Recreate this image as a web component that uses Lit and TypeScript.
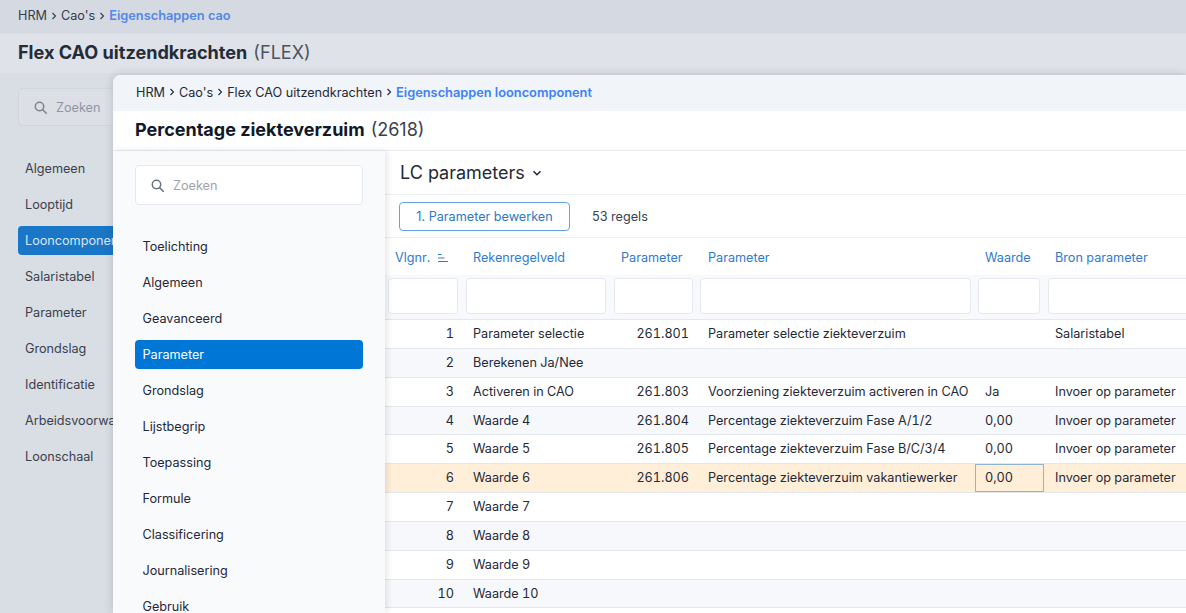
import { LitElement, html, css, svg } from "lit";
import { customElement } from "lit/decorators.js";

const searchIcon = svg`<circle cx="6.5" cy="6.5" r="4.2" fill="none" stroke="currentColor" stroke-width="1.5"/><path d="M9.7 9.7 13.2 13.2" fill="none" stroke="currentColor" stroke-width="1.6" stroke-linecap="round"/>`;

const rows: string[][] = [
  ["1", "Parameter selectie", "261.801", "Parameter selectie ziekteverzuim", "", "Salaristabel"],
  ["2", "Berekenen Ja/Nee", "", "", "", ""],
  ["3", "Activeren in CAO", "261.803", "Voorziening ziekteverzuim activeren in CAO", "Ja", "Invoer op parameter"],
  ["4", "Waarde 4", "261.804", "Percentage ziekteverzuim Fase A/1/2", "0,00", "Invoer op parameter"],
  ["5", "Waarde 5", "261.805", "Percentage ziekteverzuim Fase B/C/3/4", "0,00", "Invoer op parameter"],
  ["6", "Waarde 6", "261.806", "Percentage ziekteverzuim vakantiewerker", "0,00", "Invoer op parameter"],
  ["7", "Waarde 7", "", "", "", ""],
  ["8", "Waarde 8", "", "", "", ""],
  ["9", "Waarde 9", "", "", "", ""],
  ["10", "Waarde 10", "", "", "", ""],
];

const backNav = ["Algemeen", "Looptijd", "Looncomponenten", "Salaristabel", "Parameter", "Grondslag", "Identificatie", "Arbeidsvoorwaarden", "Loonschaal"];
const frontNav = ["Toelichting", "Algemeen", "Geavanceerd", "Parameter", "Grondslag", "Lijstbegrip", "Toepassing", "Formule", "Classificering", "Journalisering", "Gebruik"];

@customElement("app-root")
export class AppRoot extends LitElement {
  static styles = css`
    :host {
      display: block;
      position: relative;
      width: 1186px;
      height: 613px;
      overflow: hidden;
      background: #d9dde4;
      font-family: Inter, "Liberation Sans", sans-serif;
      font-size: 12.65px;
      color: #1f2937;
    }
    .crumbs { display: flex; align-items: center; gap: 3px; font-size: 12.65px; color: #343c4a; box-sizing: border-box; padding-bottom: 2px; }
    .crumbs svg { width: 8px; height: 8px; }
    .crumbs b { font-weight: 600; font-size: 12.8px; color: #5288e6; }
    .back-crumbs { height: 33px; padding-left: 18px; background: #d5dae2; }
    .back-title {
      height: 40px; padding: 0 0 4px 18px; box-sizing: border-box; display: flex; align-items: center;
      background: #dfe2e8; border-top: 1px solid #dbdfe5; font-size: 18.1px; font-weight: 700; color: #242c3a;
    }
    .back-title span { font-weight: 400; color: #4b5462; margin-left: 6px; }
    .back-body { padding: 15px 0 0 18px; }
    .back-search {
      width: 200px; height: 38px; margin-bottom: 28px; display: flex; align-items: center; gap: 9px; padding-left: 14px;
      box-sizing: border-box; border: 1px solid #d0d5dd; border-radius: 4px; background: #dcdfe6; color: #8f96a3;
    }
    .back-search svg { width: 14px; height: 14px; color: #7e8590; }
    .back-nav { display: flex; flex-direction: column; gap: 7px; width: 200px; }
    .back-nav div { height: 29px; line-height: 29px; padding-left: 7px; border-radius: 4px; color: #39414e; white-space: nowrap; overflow: hidden; }
    .back-nav .on { background: #1a76c6; color: #d9e5f2; }

    .panel {
      position: absolute; left: 113px; top: 75px; right: 0; bottom: 0;
      border-top-left-radius: 8px; overflow: hidden; background: #fff;
      box-shadow: 0 0 10px rgba(30, 41, 59, 0.18);
      display: flex; flex-direction: column;
    }
    .panel-crumbs { flex: none; height: 36px; padding-left: 23px; background: #f1f4f9; }
    .crumbs.panel-crumbs { color: #1f2937; }
    .panel-crumbs b { color: #3b82f6; }
    .panel-title {
      flex: none; height: 40px; padding: 0 0 2px 22px; display: flex; align-items: center; box-sizing: border-box;
      border-bottom: 1px solid #e8ecf2; font-size: 18px; font-weight: 700; color: #111827;
    }
    .panel-title span { font-weight: 400; color: #374151; margin-left: 6px; }
    .panel-body { flex: 1; display: flex; min-height: 0; }

    .side {
      flex: none; width: 272px; box-sizing: border-box; padding: 14px 22px 0; background: #f9fafc;
      box-shadow: 2px 0 6px rgba(30, 41, 59, 0.12); position: relative; z-index: 1;
    }
    .search {
      height: 40px; display: flex; align-items: center; gap: 9px; padding-left: 14px; box-sizing: border-box;
      border: 1px solid #e5e8ee; border-radius: 4px; background: #fff; color: #9ca3af; margin-bottom: 27px;
    }
    .search svg { width: 14px; height: 14px; color: #6b7280; }
    .nav { display: flex; flex-direction: column; gap: 7px; }
    .nav div { height: 29px; line-height: 29px; padding-left: 7.5px; border-radius: 4px; color: #1f2937; }
    .nav .on { background: #0076d6; color: #fff; }

    .main { flex: 1; min-width: 0; overflow: hidden; }
    .main-head {
      height: 44px; display: flex; align-items: center; gap: 6px; padding-left: 15px; box-sizing: border-box;
      border-bottom: 1px solid #eef1f5; font-size: 18px; color: #1f2937;
    }
    .main-head svg { width: 12px; height: 12px; margin-top: 1px; }
    .toolbar {
      height: 43px; display: flex; align-items: center; gap: 22px; padding-left: 14px; box-sizing: border-box;
      border-bottom: 1px solid #eef1f5;
    }
    .btn {
      width: 171px; height: 29px; box-sizing: border-box; border: 1px solid #62a3e4; border-radius: 4px;
      display: flex; align-items: center; justify-content: center; color: #2b78c9; background: #fff;
    }
    .count { color: #374151; }
    .grid { display: grid; grid-template-columns: 77px 148px 87px 278px 69px 260px; font-variant-numeric: tabular-nums; }
    .h { height: 37px; box-sizing: border-box; padding: 2px 0 0 11px; color: #2f7ad0; display: flex; align-items: center; gap: 7px; white-space: nowrap; }
    .h.first { padding-left: 10px; }
    .h.val { padding-left: 10px; }
    .h svg { width: 12px; height: 10px; }
    .filters { background: #f8f9fc; border-bottom: 1px solid #e3e7ee; height: 45px; box-sizing: border-box; padding: 3px 4px 0 4px; }
    .filters.tight { padding-left: 3px; }
    .filters div { height: 36px; box-sizing: border-box; background: #fff; border: 1px solid #e6e9ef; border-radius: 4px; }
    .c {
      height: 28.85px; line-height: 28.6px; box-sizing: border-box; padding: 0 11px; border-bottom: 1px solid #e3e7ee;
      white-space: nowrap; color: #1f2937;
    }
    .c.num { text-align: right; padding-right: 8px; }
    .c.val { padding-left: 10px; }
    .alt { background: #f6f8fb; }
    .sel { background: #ffeed8; }
    .focus { box-shadow: inset 0 0 0 1px #8fb5d6; }
  `;

  private crumbs(items: string[], last: string, cls: string) {
    const chev = svg`<path d="M2.5 1 5.5 4 2.5 7" fill="none" stroke="currentColor" stroke-width="1.1"/>`;
    return html`<div class="crumbs ${cls}">
      ${items.map((i) => html`<span>${i}</span><svg viewBox="0 0 8 8">${chev}</svg>`)}
      <b>${last}</b>
    </div>`;
  }

  render() {
    return html`
      ${this.crumbs(["HRM", "Cao's"], "Eigenschappen cao", "back-crumbs")}
      <div class="back-title">Flex CAO uitzendkrachten <span>(FLEX)</span></div>
      <div class="back-body">
        <div class="back-search"><svg viewBox="0 0 14 14">${searchIcon}</svg>Zoeken</div>
        <div class="back-nav">
          ${backNav.map((n) => html`<div class=${n === "Looncomponenten" ? "on" : ""}>${n}</div>`)}
        </div>
      </div>
      <section class="panel">
        ${this.crumbs(["HRM", "Cao's", "Flex CAO uitzendkrachten"], "Eigenschappen looncomponent", "panel-crumbs")}
        <div class="panel-title">Percentage ziekteverzuim <span>(2618)</span></div>
        <div class="panel-body">
          <aside class="side">
            <div class="search"><svg viewBox="0 0 14 14">${searchIcon}</svg>Zoeken</div>
            <nav class="nav">
              ${frontNav.map((n) => html`<div class=${n === "Parameter" ? "on" : ""}>${n}</div>`)}
            </nav>
          </aside>
          <main class="main">
            <div class="main-head">LC parameters
              <svg viewBox="0 0 12 12"><path d="M2.5 4.2 6 7.7 9.5 4.2" fill="none" stroke="currentColor" stroke-width="1.5"/></svg>
            </div>
            <div class="toolbar"><div class="btn">1. Parameter bewerken</div><span class="count">53 regels</span></div>
            <div class="grid">
              <div class="h first">Vlgnr.
                <svg viewBox="0 0 12 10"><path d="M1 1.5h3.5M1 5h6.5M1 8.5h10" fill="none" stroke="currentColor" stroke-width="1.1"/></svg>
              </div>
              ${["Rekenregelveld", "Parameter", "Parameter", "Waarde", "Bron parameter"].map((h) => html`<div class="h ${h === "Waarde" ? "val" : ""}">${h}</div>`)}
              ${[0, 1, 2, 3, 4, 5].map((i) => html`<div class="filters ${i === 0 || i === 3 || i === 4 ? "tight" : ""}"><div></div></div>`)}
              ${rows.map((r, i) => {
                const bg = i === 5 ? "sel" : i % 2 === 1 ? "alt" : "";
                return r.map((v, j) => {
                  const num = j === 0 || j === 2 ? "num" : "";
                  const val = j === 4 ? "val" : "";
                  const focus = i === 5 && j === 4 ? "focus" : "";
                  return html`<div class="c ${bg} ${num} ${val} ${focus}">${v}</div>`;
                });
              })}
            </div>
          </main>
        </div>
      </section>
    `;
  }
}
